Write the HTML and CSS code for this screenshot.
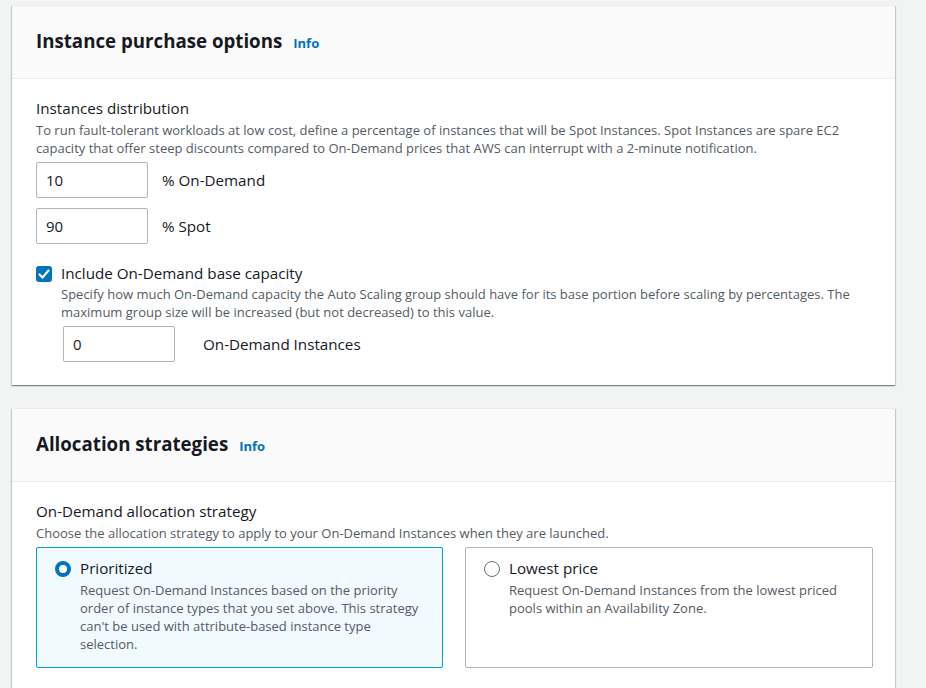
FILE: index.html
```html
<!DOCTYPE html>
<html>
<head>
<meta charset="utf-8">
<link rel="stylesheet" href="styles.css">
</head>
<body>
<div class="page">
  <section class="card">
    <header class="card-head">
      <h2>Instance purchase options</h2><a class="info">Info</a>
    </header>
    <div class="card-body">
      <div class="field-label">Instances distribution</div>
      <div class="field-desc">To run fault-tolerant workloads at low cost, define a percentage of instances that will be Spot Instances. Spot Instances are spare EC2 capacity that offer steep discounts compared to On-Demand prices that AWS can interrupt with a 2-minute notification.</div>
      <div class="input-row first"><div class="input">10</div><span class="input-label">% On-Demand</span></div>
      <div class="input-row"><div class="input">90</div><span class="input-label">% Spot</span></div>
      <div class="check-row">
        <span class="checkbox"><svg width="16" height="16" viewBox="0 0 16 16"><rect x="0.5" y="0.5" width="15" height="15" rx="2" fill="#0073bb" stroke="#0073bb"/><path d="M3.5 8.5 L6.5 11.5 L12.5 4.5" fill="none" stroke="#fff" stroke-width="2.2" stroke-linecap="round" stroke-linejoin="round"/></svg></span>
        <div class="check-text">
          <div class="check-label">Include On-Demand base capacity</div>
          <div class="field-desc">Specify how much On-Demand capacity the Auto Scaling group should have for its base portion before scaling by percentages. The maximum group size will be increased (but not decreased) to this value.</div>
          <div class="input-row base"><div class="input">0</div><span class="input-label wide">On-Demand Instances</span></div>
        </div>
      </div>
    </div>
  </section>

  <section class="card second">
    <header class="card-head">
      <h2>Allocation strategies</h2><a class="info">Info</a>
    </header>
    <div class="card-body">
      <div class="field-label">On-Demand allocation strategy</div>
      <div class="field-desc">Choose the allocation strategy to apply to your On-Demand Instances when they are launched.</div>
      <div class="tiles">
        <div class="tile selected">
          <span class="radio on"></span>
          <div class="tile-text">
            <div class="tile-label">Prioritized</div>
            <div class="field-desc">Request On-Demand Instances based on the priority order of instance types that you set above. This strategy can't be used with attribute-based instance type selection.</div>
          </div>
        </div>
        <div class="tile">
          <span class="radio"></span>
          <div class="tile-text">
            <div class="tile-label">Lowest price</div>
            <div class="field-desc">Request On-Demand Instances from the lowest priced pools within an Availability Zone.</div>
          </div>
        </div>
      </div>
    </div>
  </section>
</div>
</body>
</html>
```

FILE: styles.css
```css
* { box-sizing: border-box; }
html, body { margin: 0; padding: 0; }
body {
  background: #f2f3f3;
  font-family: "Open Sans", "Noto Sans", Arial, sans-serif;
  color: #16191f;
  font-size: 15px;
  overflow: hidden;
  height: 688px;
}
.page {
  padding: 5px 31px 0 12px;
}
.card {
  background: #fff;
  box-shadow: 0 1px 1px 0 rgba(0,28,36,0.3), 1px 1px 1px 0 rgba(0,28,36,0.15), -1px 1px 1px 0 rgba(0,28,36,0.15);
  border-top: 1px solid #eaeded;
}
.card.second { margin-top: 23px; }
.card-head {
  background: #fafafa;
  border-bottom: 1px solid #eaeded;
  height: 73px;
  display: flex;
  align-items: center;
  padding: 0 24px 0 24px;
}
.card-head h2 {
  margin: 0;
  font-size: 18.7px;
  font-weight: 700;
  line-height: 22px;
  margin-top: -2px;
}
.info {
  color: #0073bb;
  font-size: 13px;
  font-weight: 700;
  margin-left: 11px;
  margin-top: 1px;
}
.card-body {
  padding: 18px 24px 23px 24px;
}
.field-label {
  font-size: 15.2px;
  line-height: 22px;
  color: #16191f;
}
.field-desc {
  font-size: 13px;
  line-height: 18px;
  color: #545b64;
}
.card-body > .field-desc { margin-top: 2px; }
.input-row {
  display: flex;
  align-items: center;
  margin-top: 10px;
}
.input-row.first { margin-top: 5px; }
.input {
  width: 112px;
  height: 36px;
  border: 1px solid #aab7b8;
  border-radius: 2px;
  padding: 0 9px;
  display: flex;
  align-items: center;
  font-size: 15px;
  color: #16191f;
}
.input-label {
  margin-left: 14px;
  font-size: 15.2px;
}
.input-label.wide { margin-left: 28px; }
.check-row {
  display: flex;
  margin-top: 18px;
}
.checkbox {
  width: 16px;
  height: 16px;
  margin-top: 4px;
  flex: none;
}
.checkbox svg { display: block; }
.check-text { margin-left: 9px; }
.check-label { font-size: 15.2px; line-height: 22px; }
.check-text .field-desc { margin-top: 1px; }
.input-row.base { margin-top: 5px; margin-left: 2px; }
.tiles {
  display: grid;
  grid-template-columns: 407px 408px;
  column-gap: 22px;
  margin-top: 5px;
}
.tile {
  border: 1px solid #aab7b8;
  border-radius: 2px;
  height: 121px;
  display: flex;
  padding: 9px 14px 10px 18px;
}
.tile.selected {
  background: #f1faff;
  border-color: #00a1c9;
}
.radio {
  flex: none;
  width: 16px;
  height: 16px;
  border-radius: 50%;
  border: 1.5px solid #687078;
  margin-top: 4px;
  background: #fff;
}
.radio.on {
  border: 4.5px solid #0073bb;
}
.tile-text { margin-left: 9px; }
.tile-label { font-size: 15.2px; line-height: 22px; }
.tile-text .field-desc { margin-top: 2px; }
```
